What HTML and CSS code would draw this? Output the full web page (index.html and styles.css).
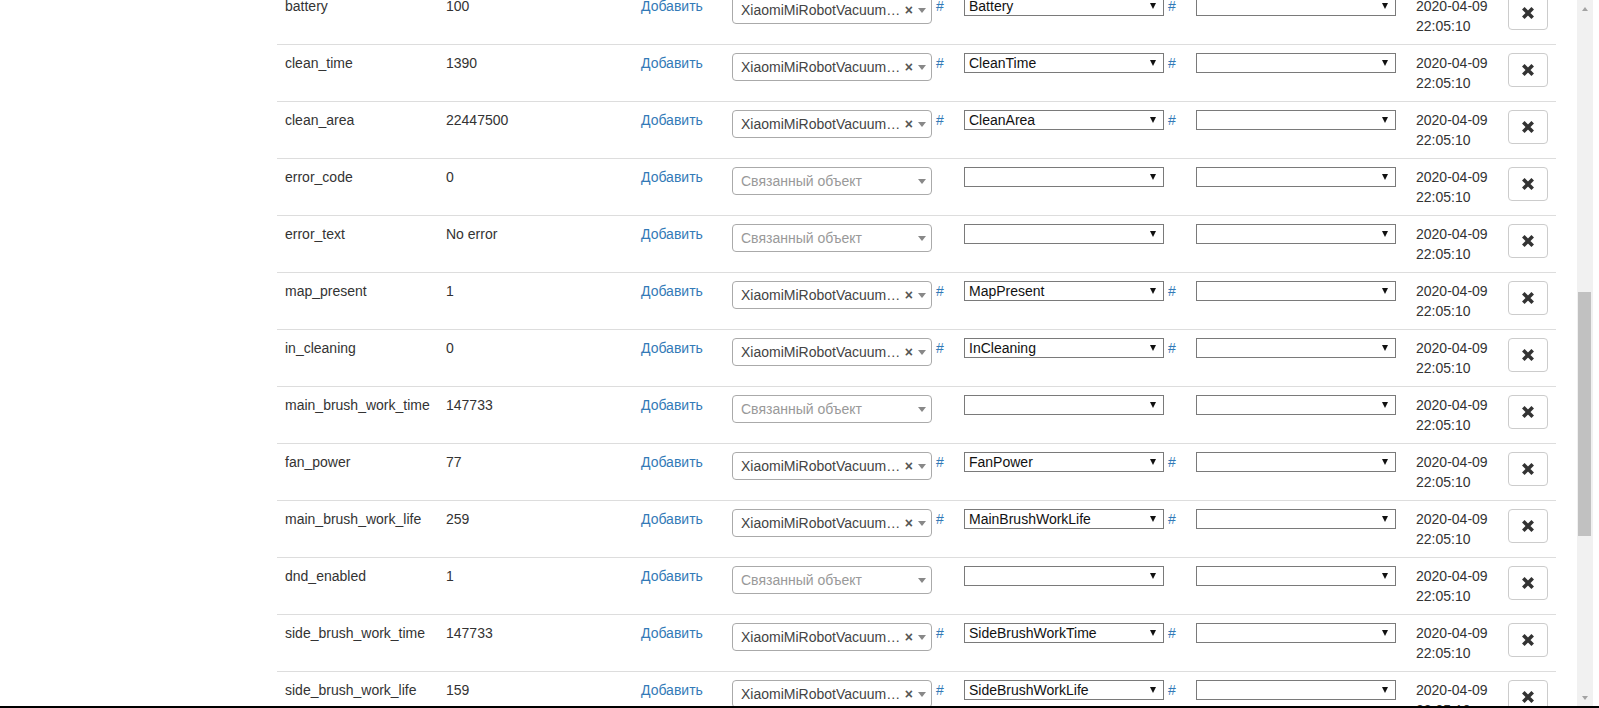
FILE: index.html
```html
<!DOCTYPE html>
<html>
<head>
  <meta charset='UTF-8'>
  <title>Свойства устройства</title>
  <link rel="stylesheet" href="styles.css">
</head>
<body>
<div class='screen'>
  <div class='page'>
    <table class='props'>
      <colgroup>
        <col class='c-key'><col class='c-val'><col class='c-add'><col class='c-obj'>
        <col class='c-prop'><col class='c-meth'><col class='c-date'><col class='c-del'>
      </colgroup>
      <tbody>
        <tr>
          <td>battery</td><td>100</td><td><a class='lnk'>Добавить</a></td>
          <td><span class='s2'><span class='s2-text'>XiaomiMiRobotVacuum01 (xiaomi)</span><span class='s2-clear'>×</span><span class='s2-arrow'><b></b></span></span> <a class='lnk'>#</a></td>
          <td><span class='sel'><span class='sel-val'>Battery</span><span class='sel-arrow'></span></span> <a class='lnk'>#</a></td>
          <td><span class='sel'><span class='sel-val'></span><span class='sel-arrow'></span></span></td>
          <td>2020-04-09 22:05:10</td>
          <td><button class='btn-del'><svg viewBox='0 0 14 14'><path d='M2.3 2.3L11.7 11.7M11.7 2.3L2.3 11.7'/></svg></button></td>
        </tr>
        <tr>
          <td>clean_time</td><td>1390</td><td><a class='lnk'>Добавить</a></td>
          <td><span class='s2'><span class='s2-text'>XiaomiMiRobotVacuum01 (xiaomi)</span><span class='s2-clear'>×</span><span class='s2-arrow'><b></b></span></span> <a class='lnk'>#</a></td>
          <td><span class='sel'><span class='sel-val'>CleanTime</span><span class='sel-arrow'></span></span> <a class='lnk'>#</a></td>
          <td><span class='sel'><span class='sel-val'></span><span class='sel-arrow'></span></span></td>
          <td>2020-04-09 22:05:10</td>
          <td><button class='btn-del'><svg viewBox='0 0 14 14'><path d='M2.3 2.3L11.7 11.7M11.7 2.3L2.3 11.7'/></svg></button></td>
        </tr>
        <tr>
          <td>clean_area</td><td>22447500</td><td><a class='lnk'>Добавить</a></td>
          <td><span class='s2'><span class='s2-text'>XiaomiMiRobotVacuum01 (xiaomi)</span><span class='s2-clear'>×</span><span class='s2-arrow'><b></b></span></span> <a class='lnk'>#</a></td>
          <td><span class='sel'><span class='sel-val'>CleanArea</span><span class='sel-arrow'></span></span> <a class='lnk'>#</a></td>
          <td><span class='sel'><span class='sel-val'></span><span class='sel-arrow'></span></span></td>
          <td>2020-04-09 22:05:10</td>
          <td><button class='btn-del'><svg viewBox='0 0 14 14'><path d='M2.3 2.3L11.7 11.7M11.7 2.3L2.3 11.7'/></svg></button></td>
        </tr>
        <tr>
          <td>error_code</td><td>0</td><td><a class='lnk'>Добавить</a></td>
          <td><span class='s2'><span class='s2-text s2-ph'>Связанный объект</span><span class='s2-arrow'><b></b></span></span></td>
          <td><span class='sel'><span class='sel-val'></span><span class='sel-arrow'></span></span></td>
          <td><span class='sel'><span class='sel-val'></span><span class='sel-arrow'></span></span></td>
          <td>2020-04-09 22:05:10</td>
          <td><button class='btn-del'><svg viewBox='0 0 14 14'><path d='M2.3 2.3L11.7 11.7M11.7 2.3L2.3 11.7'/></svg></button></td>
        </tr>
        <tr>
          <td>error_text</td><td>No error</td><td><a class='lnk'>Добавить</a></td>
          <td><span class='s2'><span class='s2-text s2-ph'>Связанный объект</span><span class='s2-arrow'><b></b></span></span></td>
          <td><span class='sel'><span class='sel-val'></span><span class='sel-arrow'></span></span></td>
          <td><span class='sel'><span class='sel-val'></span><span class='sel-arrow'></span></span></td>
          <td>2020-04-09 22:05:10</td>
          <td><button class='btn-del'><svg viewBox='0 0 14 14'><path d='M2.3 2.3L11.7 11.7M11.7 2.3L2.3 11.7'/></svg></button></td>
        </tr>
        <tr>
          <td>map_present</td><td>1</td><td><a class='lnk'>Добавить</a></td>
          <td><span class='s2'><span class='s2-text'>XiaomiMiRobotVacuum01 (xiaomi)</span><span class='s2-clear'>×</span><span class='s2-arrow'><b></b></span></span> <a class='lnk'>#</a></td>
          <td><span class='sel'><span class='sel-val'>MapPresent</span><span class='sel-arrow'></span></span> <a class='lnk'>#</a></td>
          <td><span class='sel'><span class='sel-val'></span><span class='sel-arrow'></span></span></td>
          <td>2020-04-09 22:05:10</td>
          <td><button class='btn-del'><svg viewBox='0 0 14 14'><path d='M2.3 2.3L11.7 11.7M11.7 2.3L2.3 11.7'/></svg></button></td>
        </tr>
        <tr>
          <td>in_cleaning</td><td>0</td><td><a class='lnk'>Добавить</a></td>
          <td><span class='s2'><span class='s2-text'>XiaomiMiRobotVacuum01 (xiaomi)</span><span class='s2-clear'>×</span><span class='s2-arrow'><b></b></span></span> <a class='lnk'>#</a></td>
          <td><span class='sel'><span class='sel-val'>InCleaning</span><span class='sel-arrow'></span></span> <a class='lnk'>#</a></td>
          <td><span class='sel'><span class='sel-val'></span><span class='sel-arrow'></span></span></td>
          <td>2020-04-09 22:05:10</td>
          <td><button class='btn-del'><svg viewBox='0 0 14 14'><path d='M2.3 2.3L11.7 11.7M11.7 2.3L2.3 11.7'/></svg></button></td>
        </tr>
        <tr>
          <td>main_brush_work_time</td><td>147733</td><td><a class='lnk'>Добавить</a></td>
          <td><span class='s2'><span class='s2-text s2-ph'>Связанный объект</span><span class='s2-arrow'><b></b></span></span></td>
          <td><span class='sel'><span class='sel-val'></span><span class='sel-arrow'></span></span></td>
          <td><span class='sel'><span class='sel-val'></span><span class='sel-arrow'></span></span></td>
          <td>2020-04-09 22:05:10</td>
          <td><button class='btn-del'><svg viewBox='0 0 14 14'><path d='M2.3 2.3L11.7 11.7M11.7 2.3L2.3 11.7'/></svg></button></td>
        </tr>
        <tr>
          <td>fan_power</td><td>77</td><td><a class='lnk'>Добавить</a></td>
          <td><span class='s2'><span class='s2-text'>XiaomiMiRobotVacuum01 (xiaomi)</span><span class='s2-clear'>×</span><span class='s2-arrow'><b></b></span></span> <a class='lnk'>#</a></td>
          <td><span class='sel'><span class='sel-val'>FanPower</span><span class='sel-arrow'></span></span> <a class='lnk'>#</a></td>
          <td><span class='sel'><span class='sel-val'></span><span class='sel-arrow'></span></span></td>
          <td>2020-04-09 22:05:10</td>
          <td><button class='btn-del'><svg viewBox='0 0 14 14'><path d='M2.3 2.3L11.7 11.7M11.7 2.3L2.3 11.7'/></svg></button></td>
        </tr>
        <tr>
          <td>main_brush_work_life</td><td>259</td><td><a class='lnk'>Добавить</a></td>
          <td><span class='s2'><span class='s2-text'>XiaomiMiRobotVacuum01 (xiaomi)</span><span class='s2-clear'>×</span><span class='s2-arrow'><b></b></span></span> <a class='lnk'>#</a></td>
          <td><span class='sel'><span class='sel-val'>MainBrushWorkLife</span><span class='sel-arrow'></span></span> <a class='lnk'>#</a></td>
          <td><span class='sel'><span class='sel-val'></span><span class='sel-arrow'></span></span></td>
          <td>2020-04-09 22:05:10</td>
          <td><button class='btn-del'><svg viewBox='0 0 14 14'><path d='M2.3 2.3L11.7 11.7M11.7 2.3L2.3 11.7'/></svg></button></td>
        </tr>
        <tr>
          <td>dnd_enabled</td><td>1</td><td><a class='lnk'>Добавить</a></td>
          <td><span class='s2'><span class='s2-text s2-ph'>Связанный объект</span><span class='s2-arrow'><b></b></span></span></td>
          <td><span class='sel'><span class='sel-val'></span><span class='sel-arrow'></span></span></td>
          <td><span class='sel'><span class='sel-val'></span><span class='sel-arrow'></span></span></td>
          <td>2020-04-09 22:05:10</td>
          <td><button class='btn-del'><svg viewBox='0 0 14 14'><path d='M2.3 2.3L11.7 11.7M11.7 2.3L2.3 11.7'/></svg></button></td>
        </tr>
        <tr>
          <td>side_brush_work_time</td><td>147733</td><td><a class='lnk'>Добавить</a></td>
          <td><span class='s2'><span class='s2-text'>XiaomiMiRobotVacuum01 (xiaomi)</span><span class='s2-clear'>×</span><span class='s2-arrow'><b></b></span></span> <a class='lnk'>#</a></td>
          <td><span class='sel'><span class='sel-val'>SideBrushWorkTime</span><span class='sel-arrow'></span></span> <a class='lnk'>#</a></td>
          <td><span class='sel'><span class='sel-val'></span><span class='sel-arrow'></span></span></td>
          <td>2020-04-09 22:05:10</td>
          <td><button class='btn-del'><svg viewBox='0 0 14 14'><path d='M2.3 2.3L11.7 11.7M11.7 2.3L2.3 11.7'/></svg></button></td>
        </tr>
        <tr>
          <td>side_brush_work_life</td><td>159</td><td><a class='lnk'>Добавить</a></td>
          <td><span class='s2'><span class='s2-text'>XiaomiMiRobotVacuum01 (xiaomi)</span><span class='s2-clear'>×</span><span class='s2-arrow'><b></b></span></span> <a class='lnk'>#</a></td>
          <td><span class='sel'><span class='sel-val'>SideBrushWorkLife</span><span class='sel-arrow'></span></span> <a class='lnk'>#</a></td>
          <td><span class='sel'><span class='sel-val'></span><span class='sel-arrow'></span></span></td>
          <td>2020-04-09 22:05:10</td>
          <td><button class='btn-del'><svg viewBox='0 0 14 14'><path d='M2.3 2.3L11.7 11.7M11.7 2.3L2.3 11.7'/></svg></button></td>
        </tr>
      </tbody>
    </table>
  </div>
  <div class='scrollbar'>
    <div class='sb-btn'><span class='tri-up'></span></div>
    <div class='sb-track'><div class='sb-thumb'></div></div>
    <div class='sb-btn'><span class='tri-down'></span></div>
  </div>
</div>
</body>
</html>
```

FILE: styles.css
```css
html, body { margin: 0; padding: 0; background: #fff; }
body { font-family: "Liberation Sans", Arial, sans-serif; font-size: 14px; line-height: 20px; color: #333; height: 708px; overflow: hidden; }

.screen { display: flex; height: 706px; border-bottom: 2px solid #000; }
.page { flex: 1; overflow: hidden; padding-left: 277px; }

/* таблица свойств */
.props { border-collapse: collapse; table-layout: fixed; width: 1279px; margin-top: -13px; }
.props td { border-top: 1px solid #ddd; padding: 8px; vertical-align: top; line-height: 20px; }
.c-key { width: 161px; }
.c-val { width: 195px; }
.c-add { width: 91px; }
.c-obj { width: 232px; }
.c-prop { width: 232px; }
.c-meth { width: 220px; }
.c-date { width: 92px; }
.c-del { width: 56px; }

.lnk { color: #337ab7; text-decoration: none; cursor: pointer; }

/* select2 */
.s2 { display: inline-flex; vertical-align: top; box-sizing: border-box; width: 200px; height: 28px; border: 1px solid #aaa; border-radius: 4px; background: #fff; color: #444; line-height: 27px; }
.s2-text { flex: 1; min-width: 0; padding-left: 8px; white-space: nowrap; overflow: hidden; text-overflow: ellipsis; }
.s2-ph { color: #999; }
.s2-clear { font-weight: bold; color: #555; font-size: 14px; padding-left: 3px; }
.s2-arrow { width: 18px; display: flex; align-items: center; justify-content: center; }
.s2-arrow b { width: 0; height: 0; border-style: solid; border-width: 5px 4px 0 4px; border-color: #888 transparent transparent transparent; margin-top: 1px; }

/* обычный select */
.sel { display: inline-flex; align-items: center; vertical-align: top; box-sizing: border-box; width: 200px; height: 20px; border: 1px solid #7a7a7a; background: #fff; color: #111; line-height: 18px; }
.sel-val { flex: 1; padding-left: 4px; white-space: nowrap; overflow: hidden; }
.sel-arrow { width: 0; height: 0; border-style: solid; border-width: 6px 3.5px 0 3.5px; border-color: #111 transparent transparent transparent; margin-right: 7px; }

.btn-del { display: inline-flex; align-items: center; justify-content: center; box-sizing: border-box; width: 40px; height: 34px; padding: 6px 12px; border: 1px solid #ccc; border-radius: 4px; background: #fff; cursor: pointer; }
.btn-del svg { width: 14px; height: 14px; display: block; }
.btn-del path { stroke: #333; stroke-width: 3.6; fill: none; }

/* полоса прокрутки */
.scrollbar { width: 16px; margin-right: 6px; background: #f1f1f1; display: flex; flex-direction: column; }
.sb-btn { height: 17px; display: flex; align-items: center; justify-content: center; }
.sb-track { flex: 1; }
.sb-thumb { margin: 275px 2px 0 1px; height: 244px; background: #c1c1c1; }
.tri-up { width: 0; height: 0; border-style: solid; border-width: 0 3.5px 4px 3.5px; border-color: transparent transparent #a3a3a3 transparent; }
.tri-down { width: 0; height: 0; border-style: solid; border-width: 4px 3.5px 0 3.5px; border-color: #a3a3a3 transparent transparent transparent; }
```
